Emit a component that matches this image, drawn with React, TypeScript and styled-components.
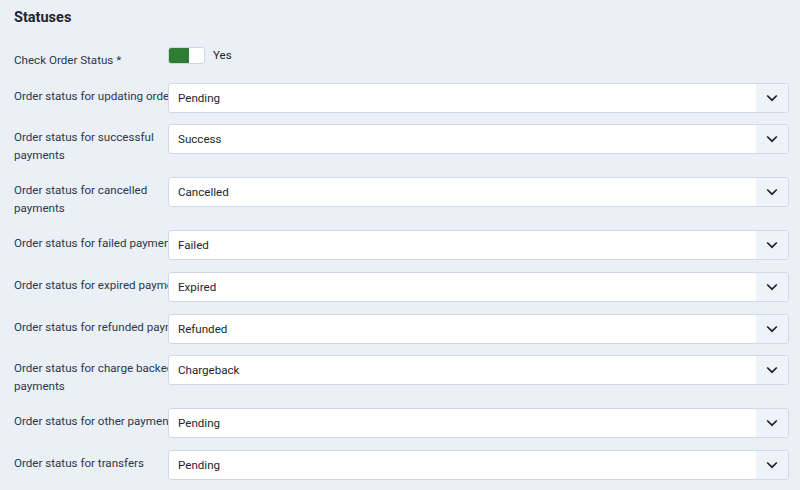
import * as React from "react";
import styled, { createGlobalStyle } from "styled-components";

const GlobalStyle = createGlobalStyle`
  html, body {
    margin: 0;
    padding: 0;
    background: #ebf0f6;
  }
`;

const Page = styled.div`
  box-sizing: border-box;
  width: 800px;
  height: 490px;
  overflow: hidden;
  padding: 8px 11px 0 14px;
  background: #ebf0f6;
  font-family: Roboto, "Liberation Sans", sans-serif;
  color: #22324a;
`;

const Heading = styled.h3`
  margin: 0 0 19.3px;
  font-size: 14.5px;
  line-height: 20px;
  font-weight: 700;
  color: #1c2536;
`;

const Row = styled.div`
  display: grid;
  grid-template-columns: 154px 1fr;
  align-items: start;
  margin-bottom: 11.8px;
`;

/* label column clips whatever the field covers */
const LabelCell = styled.div`
  overflow: hidden;
`;

const Label = styled.label`
  display: block;
  width: 185px;
  padding: 5px 0 1px;
  font-size: 11.6px;
  line-height: 17.5px;
  color: #2a374c;
`;

const SwitchWrap = styled.div`
  display: flex;
  align-items: flex-start;
  gap: 8px;
`;

const Switch = styled.span<{ $on: boolean }>`
  box-sizing: border-box;
  display: flex;
  width: 37px;
  height: 17px;
  border: 1px solid #cdd6e2;
  border-radius: 3px;
  background: #fff;
  overflow: hidden;
  &::before {
    content: "";
    width: 20px;
    height: 100%;
    background: ${(p) => (p.$on ? "#2e7d32" : "transparent")};
  }
`;

const SwitchText = styled.span`
  font-size: 11.6px;
  line-height: 17px;
  color: #22262a;
`;

const Select = styled.div`
  box-sizing: border-box;
  display: flex;
  height: 30px;
  border: 1px solid #cfd9e7;
  border-radius: 3px;
  background: #fff;
  overflow: hidden;
`;

const Value = styled.span`
  flex: 1;
  padding-left: 9px;
  font-size: 11.6px;
  line-height: 28px;
  color: #22262a;
`;

const Caret = styled.span`
  width: 32px;
  display: flex;
  align-items: center;
  justify-content: center;
  background: #eef3fa;
`;

const Chevron = () => (
  <svg width="12" height="8" viewBox="0 0 12 8">
    <path d="M1.2 1.5 6 6.2 10.8 1.5" fill="none" stroke="#1f242b" strokeWidth="1.7" />
  </svg>
);

const fields: [string, string][] = [
  ["Order status for updating orders", "Pending"],
  ["Order status for successful payments", "Success"],
  ["Order status for cancelled payments", "Cancelled"],
  ["Order status for failed payments", "Failed"],
  ["Order status for expired payments", "Expired"],
  ["Order status for refunded payments", "Refunded"],
  ["Order status for charge backed payments", "Chargeback"],
  ["Order status for other payments", "Pending"],
  ["Order status for transfers", "Pending"],
];

export default function App() {
  return (
    <Page>
      <GlobalStyle />
      <Heading>Statuses</Heading>
      <Row>
        <LabelCell>
          <Label>Check Order Status *</Label>
        </LabelCell>
        <SwitchWrap>
          <Switch $on />
          <SwitchText>Yes</SwitchText>
        </SwitchWrap>
      </Row>
      {fields.map(([label, value]) => (
        <Row key={label}>
          <LabelCell>
            <Label>{label}</Label>
          </LabelCell>
          <Select>
            <Value>{value}</Value>
            <Caret>
              <Chevron />
            </Caret>
          </Select>
        </Row>
      ))}
    </Page>
  );
}
